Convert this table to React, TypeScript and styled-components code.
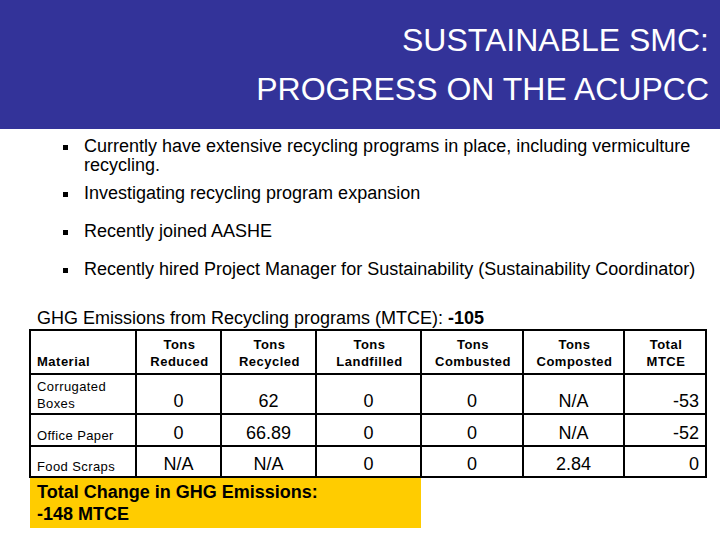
import React from "react";
import styled, { createGlobalStyle } from "styled-components";

const Global = createGlobalStyle`
  html, body { margin: 0; padding: 0; background: #ffffff; }
  body { font-family: "Liberation Sans", Arial, sans-serif; color: #000; }
`;

const Slide = styled.div`
  width: 720px;
  height: 540px;
  overflow: hidden;
  background: #fff;
  display: flex;
  flex-direction: column;
`;

const Header = styled.header`
  height: 129px;
  flex-shrink: 0;
  background: #333399;
  color: #fff;
  box-sizing: border-box;
  padding: 16px 11px 0 0;
  display: flex;
  flex-direction: column;
  align-items: flex-end;
`;

const TitleLine = styled.div`
  font-size: 32px;
  line-height: 49px;
  white-space: nowrap;
`;

const Bullets = styled.ul`
  list-style: none;
  margin: 0;
  padding: 8px 0 0 84px;
  font-size: 18px;
  line-height: 19px;
`;

const Bullet = styled.li<{ $gap: number }>`
  position: relative;
  margin-bottom: ${(p) => p.$gap}px;
  white-space: nowrap;
  &::before {
    content: "";
    position: absolute;
    left: -21px;
    top: 8px;
    width: 5px;
    height: 5px;
    background: #000;
  }
`;

const Caption = styled.div`
  margin: 29px 0 0 37px;
  font-size: 18px;
  line-height: 20px;
  white-space: nowrap;
  b { font-weight: bold; }
`;

const Table = styled.table`
  margin: 1px 0 0 29px;
  border-collapse: collapse;
  border: 2px solid #000;
  table-layout: fixed;
  width: 676px;
`;

const HeadCell = styled.th<{ $w: number; $align?: string }>`
  box-sizing: border-box;
  width: ${(p) => p.$w}px;
  border: 2px solid #000;
  height: 44px;
  padding: 0 4px 3px 6px;
  font-size: 13px;
  line-height: 17px;
  letter-spacing: 0.5px;
  font-weight: bold;
  text-align: ${(p) => p.$align || "center"};
  vertical-align: bottom;
`;

const Row = styled.tr<{ $h: number }>`
  height: ${(p) => p.$h}px;
`;

const NameCell = styled.td`
  box-sizing: border-box;
  border: 2px solid #000;
  padding: 0 4px 1px 6px;
  font-size: 13px;
  line-height: 17px;
  letter-spacing: 0.4px;
  vertical-align: bottom;
`;

const ValueCell = styled.td<{ $align?: string }>`
  box-sizing: border-box;
  border: 2px solid #000;
  padding: 0 6px 2px 6px;
  font-size: 18px;
  line-height: 20px;
  text-align: ${(p) => p.$align || "center"};
  vertical-align: bottom;
`;

const TotalBox = styled.div`
  margin-left: 30px;
  width: 391px;
  height: 50px;
  box-sizing: border-box;
  background: #ffcc00;
  padding: 3px 0 0 7px;
  font-size: 18px;
  line-height: 22px;
  font-weight: bold;
  white-space: nowrap;
`;

const cols = [
  { w: 106, h: ["", "Material"], align: "left" },
  { w: 85, h: ["Tons", "Reduced"] },
  { w: 95, h: ["Tons", "Recycled"] },
  { w: 105, h: ["Tons", "Landfilled"] },
  { w: 102, h: ["Tons", "Combusted"] },
  { w: 101, h: ["Tons", "Composted"] },
  { w: 82, h: ["Total", "MTCE"] },
];

const rows = [
  { h: 40, name: ["Corrugated", "Boxes"], v: ["0", "62", "0", "0", "N/A", "-53"] },
  { h: 32, name: ["Office Paper"], v: ["0", "66.89", "0", "0", "N/A", "-52"] },
  { h: 31, name: ["Food Scraps"], v: ["N/A", "N/A", "0", "0", "2.84", "0"] },
];

export default function App() {
  return (
    <Slide>
      <Global />
      <Header>
        <TitleLine>SUSTAINABLE SMC:</TitleLine>
        <TitleLine>PROGRESS ON THE ACUPCC</TitleLine>
      </Header>
      <Bullets>
        <Bullet $gap={9}>
          Currently have extensive recycling programs in place, including vermiculture
          <br />
          recycling.
        </Bullet>
        <Bullet $gap={19}>Investigating recycling program expansion</Bullet>
        <Bullet $gap={19}>Recently joined AASHE</Bullet>
        <Bullet $gap={0}>Recently hired Project Manager for Sustainability (Sustainability Coordinator)</Bullet>
      </Bullets>
      <Caption>
        GHG Emissions from Recycling programs (MTCE): <b>-105</b>
      </Caption>
      <Table>
        <thead>
          <tr>
            {cols.map((c, i) => (
              <HeadCell key={i} $w={c.w} $align={c.align}>
                {c.h[0] && (
                  <>
                    {c.h[0]}
                    <br />
                  </>
                )}
                {c.h[1]}
              </HeadCell>
            ))}
          </tr>
        </thead>
        <tbody>
          {rows.map((r, i) => (
            <Row key={i} $h={r.h}>
              <NameCell>
                {r.name.map((n, j) => (
                  <React.Fragment key={j}>
                    {j > 0 && <br />}
                    {n}
                  </React.Fragment>
                ))}
              </NameCell>
              {r.v.map((v, j) => (
                <ValueCell key={j} $align={j === 5 ? "right" : "center"}>
                  {v}
                </ValueCell>
              ))}
            </Row>
          ))}
        </tbody>
      </Table>
      <TotalBox>
        Total Change in GHG Emissions:
        <br />
        -148 MTCE
      </TotalBox>
    </Slide>
  );
}
